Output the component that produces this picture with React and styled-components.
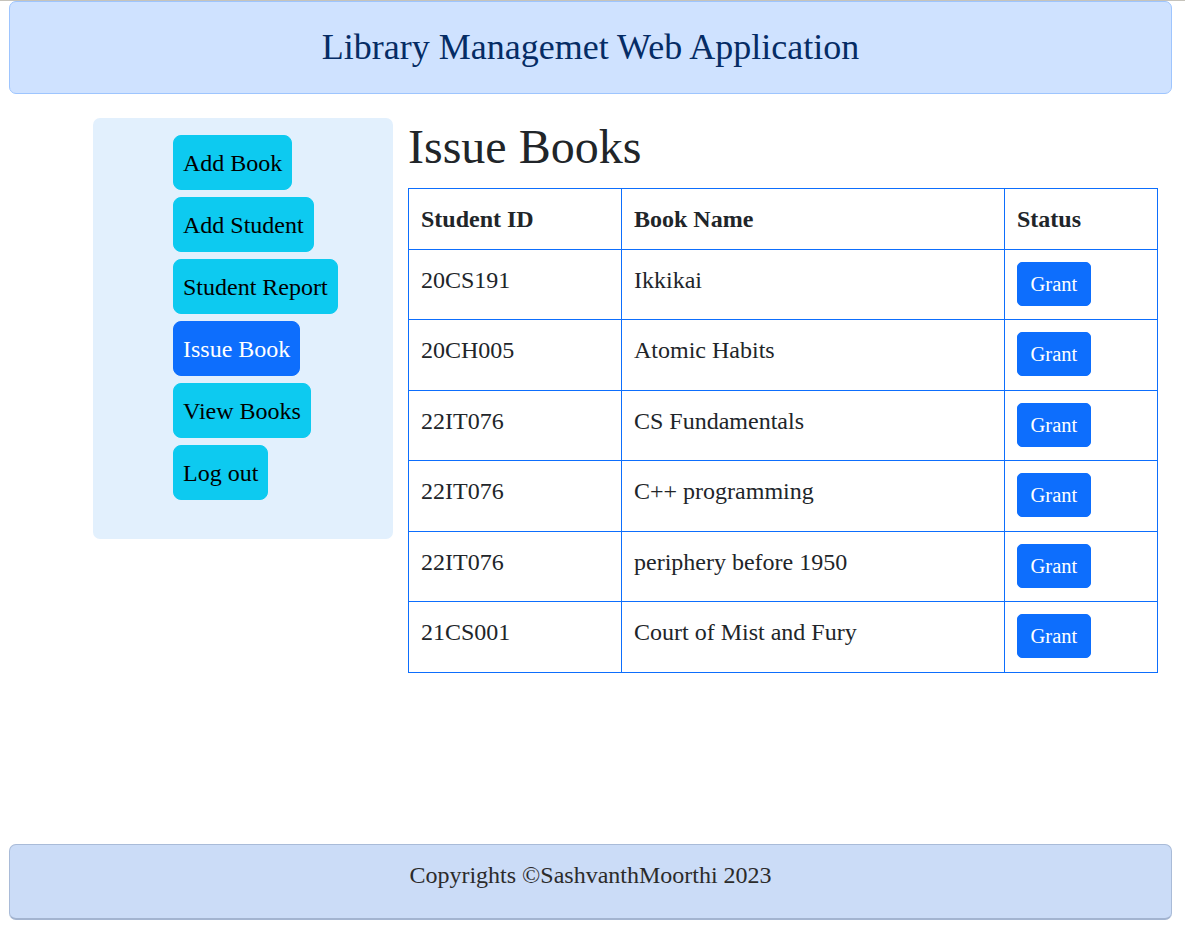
import React from 'react';
import styled, { createGlobalStyle } from 'styled-components';

const GlobalStyle = createGlobalStyle`
  * {
    box-sizing: border-box;
  }
  body {
    margin: 0;
    border-top: 1px solid #c6c3bb;
    font-family: "Liberation Serif", "Times New Roman", serif;
    color: #212529;
    background: #fff;
  }
`;

const Page = styled.div`
  min-height: calc(100vh - 1px);
  display: flex;
  flex-direction: column;
  padding: 0 13px 13px 9px;
`;

const Header = styled.header`
  height: 93px;
  display: flex;
  align-items: center;
  justify-content: center;
  padding-bottom: 2px;
  background: #cfe2ff;
  border: 1px solid #9ec5fe;
  border-radius: 7px;
  color: #052c65;
  font-size: 36px;
`;

const Main = styled.main`
  display: flex;
  align-items: flex-start;
  gap: 15px;
  padding: 24px 0 0 84px;
`;

const Sidebar = styled.nav`
  width: 300px;
  padding: 17px 0 39px 80px;
  background: #e2f0fd;
  border-radius: 7px;
  display: flex;
  flex-direction: column;
  align-items: flex-start;
  gap: 7px;
`;

const NavButton = styled.button`
  font-family: inherit;
  font-size: 24px;
  line-height: 35px;
  padding: 10px 9px 8px;
  border-radius: 8px;
  border: 1px solid ${p => (p.active ? '#0d6efd' : '#0dcaf0')};
  background: ${p => (p.active ? '#0d6efd' : '#0dcaf0')};
  color: ${p => (p.active ? '#fff' : '#000')};
  cursor: pointer;
`;

const Content = styled.section`
  width: 750px;
`;

const Title = styled.h1`
  margin: 0 0 12px;
  font-size: 48px;
  font-weight: 400;
  line-height: 1.2;
`;

const Table = styled.table`
  width: 100%;
  border-collapse: collapse;
  font-size: 24px;
  line-height: 36px;
`;

const Th = styled.th`
  text-align: left;
  font-weight: 700;
  padding: 12px 12px;
  border: 1px solid #0d6efd;
  width: ${p => p.w || 'auto'};
`;

const Td = styled.td`
  vertical-align: top;
  padding: 12px 12px 13.5px;
  border: 1px solid #0d6efd;
`;

const GrantButton = styled.button`
  display: block;
  font-family: inherit;
  font-size: 20.5px;
  line-height: 30px;
  padding: 6px 12.5px;
  border: 1px solid #0d6efd;
  border-radius: 5px;
  background: #0d6efd;
  color: #fff;
  cursor: pointer;
`;

const Footer = styled.footer`
  margin-top: auto;
  height: 76px;
  display: flex;
  align-items: center;
  justify-content: center;
  padding-bottom: 12px;
  background: #cbdcf7;
  border: 1px solid #a9bbd8;
  border-bottom: 2px solid #a3b4d0;
  border-radius: 7px;
  font-size: 24px;
  color: #2b2b2b;
`;

const menu = ['Add Book', 'Add Student', 'Student Report', 'Issue Book', 'View Books', 'Log out'];

const requests = [
  { id: '20CS191', book: 'Ikkikai' },
  { id: '20CH005', book: 'Atomic Habits' },
  { id: '22IT076', book: 'CS Fundamentals' },
  { id: '22IT076', book: 'C++ programming' },
  { id: '22IT076', book: 'periphery before 1950' },
  { id: '21CS001', book: 'Court of Mist and Fury' },
];

const App = () => {
  return (
    <>
      <GlobalStyle />
      <Page>
        <Header>Library Managemet Web Application</Header>
        <Main>
          <Sidebar>
            {menu.map(item => (
              <NavButton key={item} active={item === 'Issue Book'}>
                {item}
              </NavButton>
            ))}
          </Sidebar>
          <Content>
            <Title>Issue Books</Title>
            <Table>
              <thead>
                <tr>
                  <Th w="213px">Student ID</Th>
                  <Th w="383px">Book Name</Th>
                  <Th>Status</Th>
                </tr>
              </thead>
              <tbody>
                {requests.map((r, idx) => (
                  <tr key={idx}>
                    <Td>{r.id}</Td>
                    <Td>{r.book}</Td>
                    <Td>
                      <GrantButton>Grant</GrantButton>
                    </Td>
                  </tr>
                ))}
              </tbody>
            </Table>
          </Content>
        </Main>
        <Footer>Copyrights ©SashvanthMoorthi 2023</Footer>
      </Page>
    </>
  );
};

export default App;
